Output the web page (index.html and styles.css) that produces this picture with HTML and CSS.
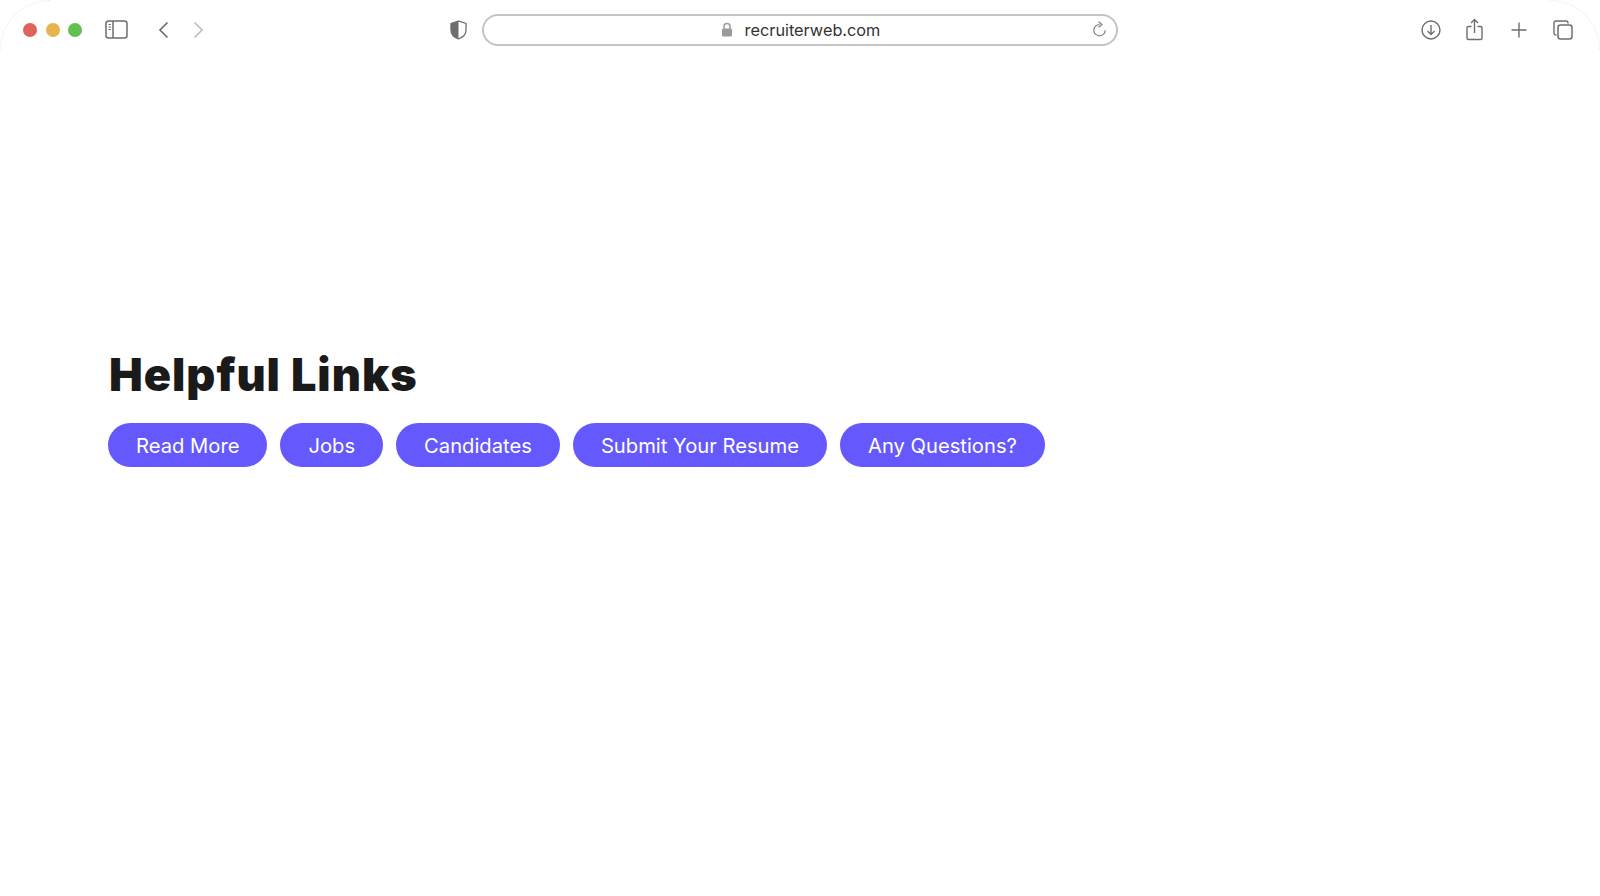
FILE: index.html
```html
<!DOCTYPE html>
<html lang="en">
<head>
  <meta charset="UTF-8" />
  <title>Helpful Links</title>
  <link rel="stylesheet" href="styles.css">
</head>
<body>

<div class="window">
  <div class="corner corner-left"></div>
  <div class="corner corner-right"></div>

  <div class="toolbar">
    <div class="tools-left">
      <div class="lights">
        <span class="light red"></span>
        <span class="light yellow"></span>
        <span class="light green"></span>
      </div>
      <svg class="icon sidebar" width="23" height="19" viewBox="0 0 23 19">
        <rect x="1" y="1" width="21" height="17" rx="2.5" fill="none" stroke="#6e6e6e" stroke-width="1.5"/>
        <path d="M8 1v17" stroke="#6e6e6e" stroke-width="1.5"/>
        <path d="M3.5 4.5h2.5M3.5 7h2.5M3.5 9.5h2.5" stroke="#6e6e6e" stroke-width="1"/>
      </svg>
      <svg class="icon back" width="11" height="18" viewBox="0 0 11 18">
        <path d="M9.5 1.5L2 9l7.5 7.5" fill="none" stroke="#6e6e6e" stroke-width="1.7"/>
      </svg>
      <svg class="icon forward" width="11" height="18" viewBox="0 0 11 18">
        <path d="M1.5 1.5L9 9l-7.5 7.5" fill="none" stroke="#bdbdbd" stroke-width="1.7"/>
      </svg>
    </div>

    <div class="tools-center">
      <svg class="icon shield" width="17" height="20" viewBox="0 0 17 20">
        <path d="M8.5 1L1 3.500v6.500c0 4.500 3.500 7.500 7.500 9 4-1.500 7.500-4.500 7.500-9V3.500z" fill="none" stroke="#6e6e6e" stroke-width="1.3"/>
        <path d="M8.500 1L1 3.500v6.500c0 4.500 3.500 7.500 7.500 9z" fill="#6e6e6e"/>
      </svg>
      <div class="urlbar">
        <div class="url">
          <svg width="12" height="15" viewBox="0 0 12 15">
            <path d="M3 7V4.500a3 3 0 0 1 6 0V7" fill="none" stroke="#9a9a9a" stroke-width="1.500"/>
            <rect x="1" y="6.500" width="10" height="8" rx="1.500" fill="#9a9a9a"/>
          </svg>
          <span>recruiterweb.com</span>
        </div>
        <svg class="reload" width="15" height="17" viewBox="0 0 15 17">
          <path d="M7.500 3.500a5.700 5.700 0 1 0 5.700 5.700" fill="none" stroke="#7a7a7a" stroke-width="1.100"/>
          <path d="M6.500 0.700L10 3.500 6.500 6.300" fill="none" stroke="#7a7a7a" stroke-width="1.100"/>
        </svg>
      </div>
    </div>

    <div class="tools-right">
      <svg class="icon" width="20" height="20" viewBox="0 0 20 20">
        <circle cx="10" cy="10" r="9" fill="none" stroke="#6e6e6e" stroke-width="1.400"/>
        <path d="M10 5v9.500M6.500 11l3.500 3.500 3.500-3.500" fill="none" stroke="#6e6e6e" stroke-width="1.400"/>
      </svg>
      <svg class="icon share" width="17" height="23" viewBox="0 0 17 23">
        <path d="M5.500 8.500H2.500a1.500 1.500 0 0 0-1.500 1.500v10a1.500 1.500 0 0 0 1.500 1.500h12a1.500 1.500 0 0 0 1.500-1.500V10a1.500 1.500 0 0 0-1.500-1.500h-3" fill="none" stroke="#6e6e6e" stroke-width="1.400"/>
        <path d="M8.500 15V1.500M5 5l3.500-3.500L12 5" fill="none" stroke="#6e6e6e" stroke-width="1.400"/>
      </svg>
      <svg class="icon plus" width="16" height="16" viewBox="0 0 16 16">
        <path d="M8 0.500v15M0.500 8h15" fill="none" stroke="#6e6e6e" stroke-width="1.400"/>
      </svg>
      <svg class="icon tabs" width="20" height="20" viewBox="0 0 20 20">
        <path d="M3.500 15H3a2 2 0 0 1-2-2V3a2 2 0 0 1 2-2h10a2 2 0 0 1 2 2v.5" fill="none" stroke="#6e6e6e" stroke-width="1.400"/>
        <rect x="5" y="5" width="14" height="14" rx="2.500" fill="none" stroke="#6e6e6e" stroke-width="1.500"/>
      </svg>
    </div>
  </div>

  <div class="content">
    <h1>Helpful Links</h1>
    <div class="links">
      <a class="pill" href="#">Read More</a>
      <a class="pill" href="#">Jobs</a>
      <a class="pill" href="#">Candidates</a>
      <a class="pill" href="#">Submit Your Resume</a>
      <a class="pill" href="#">Any Questions?</a>
    </div>
  </div>
</div>

</body>
</html>
```

FILE: styles.css
```css
body {
  margin: 0;
  background-color: #fff;
  font-family: Inter, "Liberation Sans", sans-serif;
}

.window {
  position: relative;
  height: 896px;
  overflow: hidden;
}

/* faint rounded window edge, only visible in the top corners */
.corner {
  position: absolute;
  top: 0;
  width: 50px;
  height: 50px;
  box-sizing: border-box;
  border-top: 1px dotted #e6e8ee;
}

.corner-left {
  left: 0;
  border-left: 1px dotted #e6e8ee;
  border-top-left-radius: 50px;
}

.corner-right {
  right: 0;
  border-right: 1px dotted #e6e8ee;
  border-top-right-radius: 50px;
}

.toolbar {
  display: flex;
  align-items: center;
  height: 59px;
}

.icon {
  display: block;
  flex: none;
}

.tools-left {
  display: flex;
  align-items: center;
  width: 443px;
  padding-left: 23px;
  box-sizing: border-box;
}

.lights {
  display: flex;
  gap: 8.5px;
}

.light {
  width: 14px;
  height: 14px;
  border-radius: 50%;
}

.red { background: #e0635a; }
.yellow { background: #e8b450; }
.green { background: #62c050; }

.sidebar { margin-left: 23px; }
.back { margin-left: 30px; }
.forward { margin-left: 24px; }

.tools-center {
  display: flex;
  align-items: center;
  gap: 15px;
  margin-left: 7px;
}

.urlbar {
  display: flex;
  align-items: center;
  width: 636px;
  height: 32px;
  box-sizing: border-box;
  padding-right: 9px;
  border: 2px solid #c4c4c4;
  border-radius: 16px;
}

.url {
  display: flex;
  flex: 1;
  align-items: center;
  justify-content: center;
  gap: 12px;
  padding-left: 25px;
  font-size: 16.3px;
  color: #333;
}

.tools-right {
  display: flex;
  align-items: center;
  margin-left: 303px;
}

.share { margin-left: 25px; }
.plus { margin-left: 28px; }
.tabs { margin-left: 26px; }

.content {
  padding: 289px 0 0 108px;
}

h1 {
  margin: 0 0 21px 1px;
  font-size: 45px;
  line-height: 54px;
  font-weight: 900;
  letter-spacing: 1px;
  color: #1a1a1a;
}

.links {
  display: flex;
  gap: 13px;
}

.pill {
  padding: 2px 28px 0;
  line-height: 42px;
  border-radius: 22px;
  background: #6559fd;
  color: #fff;
  font-size: 20.2px;
  text-decoration: none;
}
```
